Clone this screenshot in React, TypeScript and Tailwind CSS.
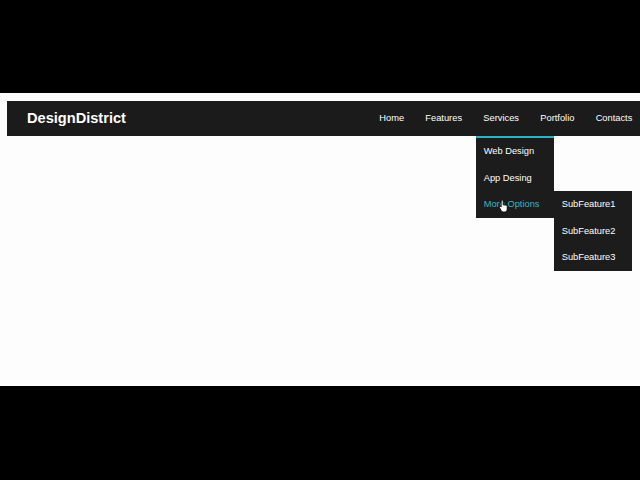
import React from "react";

const navItems = ["Home", "Features", "Services", "Portfolio", "Contacts"];

function HandCursor() {
  return (
    <svg
      className="absolute left-[498px] top-[199px] z-30 pointer-events-none"
      width="11"
      height="14"
      viewBox="0 0 15 21"
    >
      <path
        d="M5.5 1.5 C6.3 1.5 7 2.2 7 3 V9 C7.3 8.6 8.5 8.5 9 9.2 C9.4 8.7 10.7 8.7 11.1 9.5 C11.6 9.1 12.9 9.2 13.1 10.2 V15 C13.1 17.5 11.8 19.5 9.5 19.5 H7.5 C6 19.5 5 18.7 4.2 17.5 L1.5 13 C1 12.2 1.4 11.3 2.2 11.1 C2.9 10.9 3.5 11.3 4 12 V3 C4 2.2 4.7 1.5 5.5 1.5 Z"
        fill="#ffffff"
        stroke="#000000"
        strokeWidth="1.3"
        strokeLinejoin="round"
      />
    </svg>
  );
}

export default function App() {
  return (
    <div className="relative w-[640px] h-[480px] overflow-hidden bg-black flex flex-col font-['Liberation_Sans',Arial,sans-serif]">
      <div className="h-[93px] shrink-0 bg-black" />
      <div className="h-[293px] shrink-0 bg-[#fdfdfd] pl-[7px] pt-[8px]">
        <nav className="h-[35px] w-[636px] bg-[#1b1b1b] flex items-center">
          <div className="pl-[20px] text-[14.6px] font-bold text-white leading-none">
            DesignDistrict
          </div>
          <ul className="ml-auto flex h-full">
            {navItems.map((item) => (
              <li
                key={item}
                className="relative h-full px-[10.65px] flex items-center text-[9.3px] text-white"
              >
                {item}
                {item === "Services" && (
                  <div className="absolute top-full left-[3px] w-[78px] bg-[#1c1c1c] border-t-2 border-[#2cb3c6] z-10">
                    <div className="h-[26.5px] pl-[8px] pt-[2px] flex items-center text-white">
                      Web Design
                    </div>
                    <div className="h-[26.5px] pl-[8px] pt-[2px] flex items-center text-white">
                      App Desing
                    </div>
                    <div className="relative h-[26.5px] pl-[8px] pt-[2px] flex items-center text-[#37b5c6]">
                      More Options
                      <div className="absolute left-full top-0 w-[78px] bg-[#1c1c1c]">
                        {["SubFeature1", "SubFeature2", "SubFeature3"].map((s) => (
                          <div
                            key={s}
                            className="h-[26.5px] pl-[8px] pt-[2px] flex items-center text-white"
                          >
                            {s}
                          </div>
                        ))}
                      </div>
                    </div>
                  </div>
                )}
              </li>
            ))}
          </ul>
        </nav>
      </div>
      <div className="flex-1 bg-black" />
      <HandCursor />
    </div>
  );
}
